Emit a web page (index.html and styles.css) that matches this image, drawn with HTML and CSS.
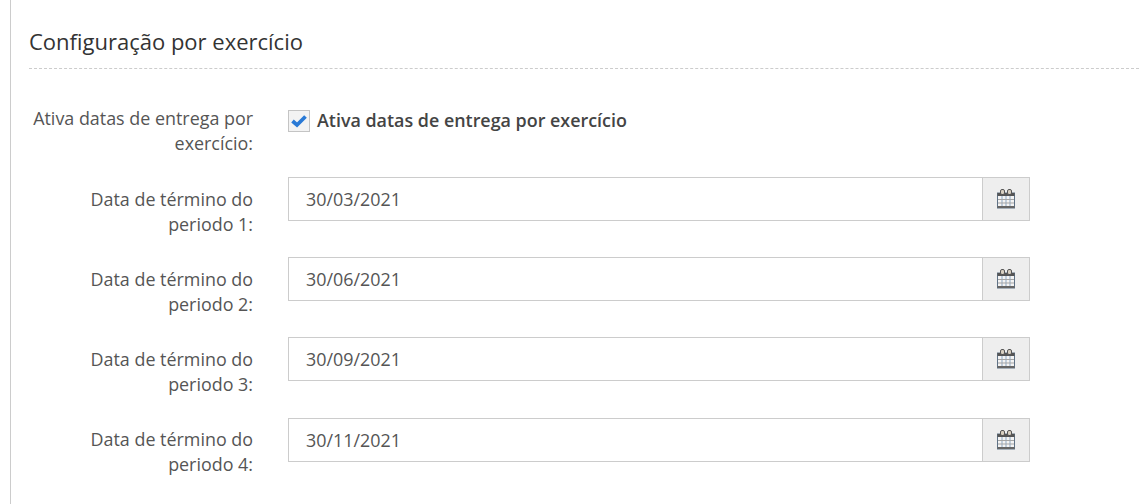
FILE: index.html
```html
<!DOCTYPE html>
<html lang="pt-BR">
<head>
    <meta charset="UTF-8">
    <title>Configuração por exercício</title>
    <link rel="stylesheet" href="styles.css">
</head>
<body>
    <main class="panel">
        <h2 class="panel-title">Configuração por exercício</h2>

        <div class="form-row form-row-check">
            <label class="form-label">Ativa datas de entrega por exercício:</label>
            <label class="check-field">
                <span class="check-box">
                    <svg viewBox="0 0 16 14" width="16" height="14"><path d="M1.5 7 L6 11 L14.500 2.500" fill="none" stroke="#2a7ad6" stroke-width="3.800"/></svg>
                </span>
                <span class="check-text">Ativa datas de entrega por exercício</span>
            </label>
        </div>

        <div class="form-row">
            <label class="form-label">Data de término do periodo 1:</label>
            <div class="date-field">
                <input class="date-input" type="text" value="30/03/2021">
                <span class="date-addon">
                    <svg viewBox="0 0 18 22" width="18" height="22"><use href="#calendar"/></svg>
                </span>
            </div>
        </div>

        <div class="form-row">
            <label class="form-label">Data de término do periodo 2:</label>
            <div class="date-field">
                <input class="date-input" type="text" value="30/06/2021">
                <span class="date-addon">
                    <svg viewBox="0 0 18 22" width="18" height="22"><use href="#calendar"/></svg>
                </span>
            </div>
        </div>

        <div class="form-row">
            <label class="form-label">Data de término do periodo 3:</label>
            <div class="date-field">
                <input class="date-input" type="text" value="30/09/2021">
                <span class="date-addon">
                    <svg viewBox="0 0 18 22" width="18" height="22"><use href="#calendar"/></svg>
                </span>
            </div>
        </div>

        <div class="form-row">
            <label class="form-label">Data de término do periodo 4:</label>
            <div class="date-field">
                <input class="date-input" type="text" value="30/11/2021">
                <span class="date-addon">
                    <svg viewBox="0 0 18 22" width="18" height="22"><use href="#calendar"/></svg>
                </span>
            </div>
        </div>
    </main>

    <svg width="0" height="0" class="icon-defs">
        <defs>
            <g id="calendar">
                <rect x="0.500" y="5" width="17" height="15" fill="#f4f4f4" stroke="#5f7286" stroke-width="1"/>
                <path d="M5 8V18M9 8V18M13 8V18" stroke="#9db4cc" stroke-width="1.200" fill="none"/>
                <path d="M1 11.500H17M1 15H17" stroke="#a5a5a5" stroke-width="1" fill="none"/>
                <rect x="0.500" y="5" width="17" height="3" fill="#555"/>
                <rect x="0.500" y="18" width="17" height="2" fill="#666"/>
                <rect x="3.500" y="1.500" width="4" height="5" rx="1.500" fill="#d8cfc0" stroke="#555" stroke-width="1"/>
                <rect x="10.500" y="1.500" width="4" height="5" rx="1.500" fill="#d8cfc0" stroke="#555" stroke-width="1"/>
            </g>
        </defs>
    </svg>
</body>
</html>
```

FILE: styles.css
```css
* {
    box-sizing: border-box;
}

html, body {
    height: 504px;
    overflow: hidden;
}

body {
    margin: 0;
    padding-left: 10px;
    font-family: "Open Sans", sans-serif;
    font-size: 17.9px;
    color: #444;
    background: #fff;
}

.panel {
    height: 504px;
    padding-left: 18px;
    border-left: 1px solid #ccc;
}

.panel-title {
    margin: 0 0 37px;
    padding: 26px 0 12px 0;
    font-size: 22px;
    line-height: 30px;
    font-weight: 400;
    color: #333;
    border-bottom: 1px dashed #ccc;
}

/* Form rows */
.form-row {
    display: flex;
    gap: 35px;
    height: 60px;
    margin-bottom: 20.2px;
}

.form-row .form-label {
    margin-top: 9.8px;
}

.form-row-check {
    height: 50px;
    margin-bottom: 21px;
}

.form-row-check .form-label {
    margin-top: 0;
}

.form-label {
    flex: none;
    width: 224px;
    text-align: right;
    line-height: 25px;
    color: #555;
}

.check-field {
    display: flex;
    align-items: flex-start;
    gap: 7px;
    height: 22px;
    margin-top: 4px;
    font-weight: 600;
    color: #444;
}

.check-text {
    line-height: 20px;
}

.check-box {
    display: flex;
    align-items: center;
    justify-content: center;
    width: 22px;
    height: 22px;
    border: 1px solid #c4c4c4;
    background: #f3f3f3;
}

.date-field {
    display: flex;
    width: 742px;
    height: 44px;
    border: 1px solid #ccc;
}

.date-input {
    flex: 1;
    min-width: 0;
    padding: 0 17px;
    border: 0;
    font: inherit;
    color: #555;
    background: #fff;
}

.date-addon {
    display: flex;
    align-items: center;
    justify-content: center;
    width: 47px;
    border-left: 1px solid #ccc;
    background: #eee;
}

.icon-defs {
    position: absolute;
}
```
